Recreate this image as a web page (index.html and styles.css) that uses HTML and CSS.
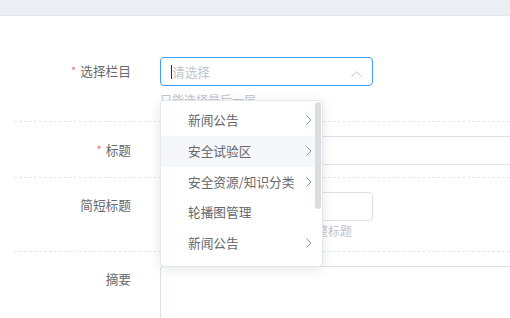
FILE: index.html
```html
<!DOCTYPE html>
<html lang="zh-CN">
<head>
    <meta charset="UTF-8">
    <meta name="viewport" content="width=device-width, initial-scale=1.0">
    <title>编辑文章</title>
    <link rel="stylesheet" href="styles.css">
</head>
<body>

    <!-- Top bar -->
    <div class="topbar"></div>

    <!-- Form -->
    <div class="form">
        <div class="form-item item-column">
            <label class="label"><span class="star">*</span>选择栏目</label>
            <div class="content">
                <div class="select">
                    <div class="input input-focus">
                        <span class="caret"></span><span class="placeholder">请选择</span>
                        <svg class="arrow-up" width="11" height="6" viewBox="0 0 11 6">
                            <polyline points="0.5,5.5 5.5,0.8 10.5,5.5" fill="none" stroke="#c0c4cc" stroke-width="1"/>
                        </svg>
                    </div>

                    <!-- Cascader menu -->
                    <div class="menu">
                        <ul>
                            <li>新闻公告<svg class="arrow-right" width="6" height="10" viewBox="0 0 6 10"><polyline points="0.5,0.5 5,5 0.5,9.5" fill="none" stroke="#909399" stroke-width="1"/></svg></li>
                            <li class="active">安全试验区<svg class="arrow-right" width="6" height="10" viewBox="0 0 6 10"><polyline points="0.5,0.5 5,5 0.5,9.5" fill="none" stroke="#909399" stroke-width="1"/></svg></li>
                            <li>安全资源/知识分类<svg class="arrow-right" width="6" height="10" viewBox="0 0 6 10"><polyline points="0.5,0.5 5,5 0.5,9.5" fill="none" stroke="#909399" stroke-width="1"/></svg></li>
                            <li>轮播图管理</li>
                            <li>新闻公告<svg class="arrow-right" width="6" height="10" viewBox="0 0 6 10"><polyline points="0.5,0.5 5,5 0.5,9.5" fill="none" stroke="#909399" stroke-width="1"/></svg></li>
                        </ul>
                        <div class="scrollbar"></div>
                    </div>
                </div>
                <div class="tip tip-column">只能选择最后一层</div>
            </div>
        </div>

        <div class="form-item item-title">
            <label class="label"><span class="star">*</span>标题</label>
            <div class="content">
                <div class="input input-wide"></div>
            </div>
        </div>

        <div class="form-item item-short">
            <label class="label">简短标题</label>
            <div class="content">
                <div class="input"></div>
                <div class="tip tip-short">留空时，列表中将默认显示完整标题</div>
            </div>
        </div>

        <div class="form-item item-summary">
            <label class="label">摘要</label>
            <div class="content">
                <div class="textarea"></div>
            </div>
        </div>
    </div>

</body>
</html>
```

FILE: styles.css
```css
/* General Styling */
body {
    margin: 0;
    width: 510px;
    height: 318px;
    overflow: hidden;
    background: #fff;
    font-family: "Noto Sans CJK SC", "Noto Sans", sans-serif;
    font-size: 12.7px;
    color: #66686d;
}

.topbar {
    height: 15px;
    background: #ebeef3;
    border-bottom: 1px solid #e1e7f0;
}

/* Form */
.form {
    padding-top: 27px;
    margin-left: 14px;
}

.form-item {
    display: flex;
    padding: 14px 0 12px;
    border-bottom: 1px dashed #e6e8eb;
}

.form-item.item-column { padding-bottom: 12px; }
.form-item.item-short { padding-bottom: 11px; }
.form-item.item-summary {
    border-bottom: none;
    padding-bottom: 0;
}

.label {
    width: 146px;
    flex-shrink: 0;
    box-sizing: border-box;
    padding-right: 29px;
    text-align: right;
    line-height: 26px;
    color: #66686d;
}

.star {
    color: #f56c6c;
    margin-right: 4px;
    font-size: 11px;
    vertical-align: 1px;
}

.content {
    flex: 1;
    min-width: 0;
}

/* Inputs */
.select {
    position: relative;
    width: 213px;
}

.input {
    position: relative;
    width: 213px;
    height: 29px;
    box-sizing: border-box;
    border: 1px solid #dcdfe6;
    border-radius: 4px;
    display: flex;
    align-items: center;
    padding-left: 10px;
}

.input-focus {
    border-color: #409eff;
}

/* runs on past the right edge of the window */
.input-wide {
    width: 100%;
    border-right: none;
    border-radius: 4px 0 0 4px;
}

.caret {
    width: 1px;
    height: 14px;
    background: #303133;
}

.placeholder {
    color: #c0c4cc;
}

.arrow-up {
    position: absolute;
    right: 10px;
    top: 13px;
}

.textarea {
    width: 100%;
    height: 52px;
    box-sizing: border-box;
    border: 1px solid #dcdfe6;
    border-right: none;
    border-bottom: none;
    border-radius: 4px 0 0 0;
}

.tip {
    font-size: 12px;
    line-height: 18px;
    color: #c0c4cc;
}

.tip-column { margin-top: 5px; }
.tip-short { margin-top: 1px; }

/* Cascader menu */
.menu {
    position: absolute;
    top: 43px;
    left: 0;
    width: 163px;
    height: 167px;
    box-sizing: border-box;
    background: #fff;
    border: 1px solid #e4e7ed;
    border-radius: 4px;
    box-shadow: 0 2px 12px rgba(0, 0, 0, 0.1);
    z-index: 10;
    overflow: hidden;
}

.menu ul {
    list-style: none;
    margin: 0;
    padding: 4px 0;
}

.menu li {
    position: relative;
    height: 30.8px;
    line-height: 30.8px;
    padding-left: 27px;
    color: #66686d;
    white-space: nowrap;
}

.menu li.active {
    background: #f5f7fa;
}

.arrow-right {
    position: absolute;
    left: 145px;
    top: 10px;
}

.scrollbar {
    position: absolute;
    top: 1px;
    right: 1px;
    width: 6px;
    height: 107px;
    border-radius: 3px;
    background: #dcdde0;
}
```
